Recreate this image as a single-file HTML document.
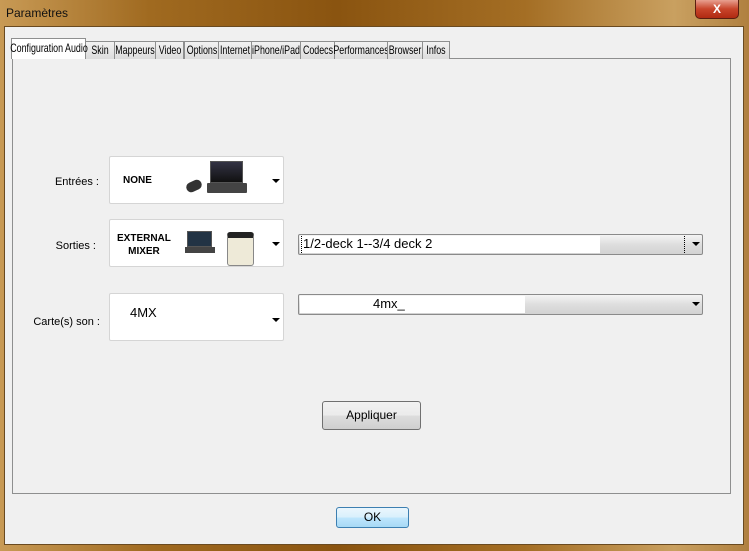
<!DOCTYPE html>
<html><head><meta charset="utf-8"><style>
*{margin:0;padding:0;box-sizing:border-box}
body{width:749px;height:551px;overflow:hidden;position:relative;font-family:"Liberation Sans",sans-serif;font-size:12px;color:#000;
background:linear-gradient(90deg,#c89a55 0%,#a06a20 20%,#8a5410 45%,#a46e24 70%,#c9a060 90%,#b08040 100%)}
.abs{position:absolute}
.title{left:6px;top:6px;font-size:12px;color:#111}
.close{left:695px;top:0;width:44px;height:19px;border:1px solid #5a1e10;border-top:none;border-radius:0 0 5px 5px;background:linear-gradient(#e8a090,#c8442a 50%,#b02a12);color:#fff;font-weight:bold;text-align:center;line-height:18px;font-size:12px}
.client{left:4px;top:26px;width:740px;height:519px;background:#f0f0f0;border:1px solid #6a4a20}
.tab{position:absolute;top:41px;height:18px;border:1px solid #8e8f8f;border-bottom:none;background:linear-gradient(#f2f2f2,#dcdcdc);font-size:12px;white-space:nowrap}
.tab span{position:absolute;left:50%;top:1px;transform:translateX(-50%) scaleX(0.74);line-height:15px}
.tab.act{top:38px;height:21px;background:#fff;z-index:2}
.tab.act span{top:2px}
.panel{left:12px;top:58px;width:719px;height:436px;border:1px solid #8e8f8f;background:#f0f0f0}
.lbl{font-size:11px;text-align:right;width:90px}
.box{position:absolute;left:109px;width:175px;background:#fff;border:1px solid #d5d5d5;border-radius:2px}
.arr{position:absolute;width:0;height:0;border-left:4px solid transparent;border-right:4px solid transparent;border-top:4px solid #000}
.combo{position:absolute;left:298px;width:405px;height:21px;border:1px solid #8a8a8a;border-radius:2px;background:linear-gradient(#f4f4f4,#dedede 50%,#d2d2d2)}
.btn{position:absolute;border:1px solid #707070;border-radius:3px;background:linear-gradient(#f2f2f2,#ebebeb 50%,#dddddd 51%,#cfcfcf);text-align:center;font-size:12px}
.lap{position:absolute;background:#222;border:1px solid #555}
</style></head><body>
<div class="abs title">Paramètres</div>
<div class="abs close">X</div>
<div class="abs client"></div>
<div class="abs panel"></div>
<div class="tab act" style="left:11px;width:75px"><span>Configuration Audio</span></div>
<div class="tab" style="left:85px;width:30px"><span>Skin</span></div>
<div class="tab" style="left:114px;width:42px"><span>Mappeurs</span></div>
<div class="tab" style="left:155px;width:29px"><span>Video</span></div>
<div class="tab" style="left:184px;width:35px"><span>Options</span></div>
<div class="tab" style="left:218px;width:34px"><span>Internet</span></div>
<div class="tab" style="left:251px;width:50px"><span>iPhone/iPad</span></div>
<div class="tab" style="left:300px;width:35px"><span>Codecs</span></div>
<div class="tab" style="left:334px;width:54px"><span>Performances</span></div>
<div class="tab" style="left:387px;width:36px"><span>Browser</span></div>
<div class="tab" style="left:422px;width:28px"><span>Infos</span></div>

<div class="abs lbl" style="left:9px;top:176px">Entrées :</div>
<div class="abs lbl" style="left:6px;top:240px">Sorties :</div>
<div class="abs lbl" style="left:10px;top:316px">Carte(s) son :</div>

<div class="box" style="top:156px;height:48px">
 <div class="abs" style="left:13px;top:18px;font-weight:bold;font-size:10px">NONE</div>
 <div class="lap" style="left:100px;top:4px;width:33px;height:22px;background:linear-gradient(#334,#111)"></div>
 <div class="abs" style="left:97px;top:26px;width:40px;height:10px;background:#444;border-radius:1px"></div>
 <div class="abs" style="left:76px;top:24px;width:16px;height:10px;background:#333;border-radius:6px;transform:rotate(-25deg)"></div>
 <div class="arr" style="left:162px;top:22px"></div>
</div>
<div class="box" style="top:219px;height:48px">
 <div class="abs" style="left:7px;top:12px;font-weight:bold;font-size:10px;text-align:center;line-height:13px">EXTERNAL<br>MIXER</div>
 <div class="lap" style="left:77px;top:11px;width:25px;height:16px;background:#234"></div>
 <div class="abs" style="left:75px;top:27px;width:30px;height:6px;background:#444"></div>
 <div class="abs" style="left:117px;top:12px;width:27px;height:34px;background:#eeead8;border:1px solid #888;border-radius:3px;border-top:6px solid #222"></div>
 <div class="arr" style="left:162px;top:22px"></div>
</div>
<div class="box" style="top:293px;height:48px">
 <div class="abs" style="left:20px;top:11px;font-size:13px">4MX</div>
 <div class="arr" style="left:162px;top:24px"></div>
</div>

<div class="combo" style="top:234px">
 <div class="abs" style="left:1px;top:1px;width:300px;height:17px;background:#fff"></div>
 <div class="abs" style="left:2px;top:1px;font-size:13px;border:1px dotted #000;border-top:none;border-bottom:none;padding:0 1px;width:384px;height:17px;line-height:16px">1/2-deck 1--3/4 deck 2</div>
 <div class="arr" style="left:393px;top:7px"></div>
</div>
<div class="combo" style="top:294px">
 <div class="abs" style="left:1px;top:1px;width:225px;height:17px;background:#fff"></div>
 <div class="abs" style="left:74px;top:1px;font-size:13px;line-height:16px">4mx_</div>
 <div class="arr" style="left:393px;top:7px"></div>
</div>

<div class="btn" style="left:322px;top:401px;width:99px;height:29px;line-height:27px">Appliquer</div>
<div class="btn" style="left:336px;top:507px;width:73px;height:21px;line-height:19px;border-color:#3c7fb1;background:linear-gradient(#eaf6fd,#d9f0fc 50%,#bee6fd 51%,#a7d9f5)">OK</div>
</body></html>
